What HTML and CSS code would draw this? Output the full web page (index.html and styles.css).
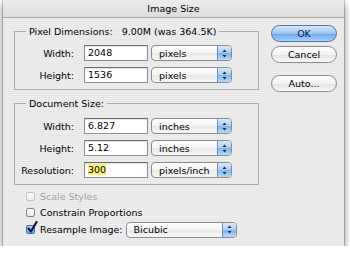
FILE: index.html
```html
<!DOCTYPE html>
<html lang="en">
<head>
    <meta charset="UTF-8">
    <title>Image Size</title>
    <link rel="stylesheet" href="styles.css">
</head>
<body>
    <div class="window">
        <div class="titlebar">Image Size</div>
        <div class="dialog">
            <div class="main">
                <fieldset class="group">
                    <legend>Pixel Dimensions:<span class="gap">9.00M (was 364.5K)</span></legend>
                    <div class="row">
                        <label>Width:</label>
                        <div class="field">2048</div>
                        <div class="popup">pixels<span class="stepper"><svg width="5" height="9" viewBox="0 0 5 9"><path d="M2.5 0.5 L4.5 3 L0.5 3 Z M0.5 6 L4.5 6 L2.5 8.5 Z" fill="#1d2d45"/></svg></span></div>
                    </div>
                    <div class="row">
                        <label>Height:</label>
                        <div class="field">1536</div>
                        <div class="popup">pixels<span class="stepper"><svg width="5" height="9" viewBox="0 0 5 9"><path d="M2.5 0.5 L4.5 3 L0.5 3 Z M0.5 6 L4.5 6 L2.5 8.5 Z" fill="#1d2d45"/></svg></span></div>
                    </div>
                </fieldset>

                <fieldset class="group doc">
                    <legend>Document Size:</legend>
                    <div class="row">
                        <label>Width:</label>
                        <div class="field">6.827</div>
                        <div class="popup">inches<span class="stepper"><svg width="5" height="9" viewBox="0 0 5 9"><path d="M2.5 0.5 L4.5 3 L0.5 3 Z M0.5 6 L4.5 6 L2.5 8.5 Z" fill="#1d2d45"/></svg></span></div>
                    </div>
                    <div class="row">
                        <label>Height:</label>
                        <div class="field">5.12</div>
                        <div class="popup">inches<span class="stepper"><svg width="5" height="9" viewBox="0 0 5 9"><path d="M2.5 0.5 L4.5 3 L0.5 3 Z M0.5 6 L4.5 6 L2.5 8.5 Z" fill="#1d2d45"/></svg></span></div>
                    </div>
                    <div class="row">
                        <label>Resolution:</label>
                        <div class="field"><span class="selected">300</span></div>
                        <div class="popup">pixels/inch<span class="stepper"><svg width="5" height="9" viewBox="0 0 5 9"><path d="M2.5 0.5 L4.5 3 L0.5 3 Z M0.5 6 L4.5 6 L2.5 8.5 Z" fill="#1d2d45"/></svg></span></div>
                    </div>
                </fieldset>

                <div class="options">
                    <div class="check disabled"><span class="box"></span>Scale Styles</div>
                    <div class="check"><span class="box"></span>Constrain Proportions</div>
                    <div class="check resample">
                        <span class="box checked"><svg width="12" height="13" viewBox="0 0 12 13"><path d="M2.5 7.5 L5 10.5 L10.5 1" fill="none" stroke="#0f1f44" stroke-width="2.2" stroke-linecap="round" stroke-linejoin="round"/></svg></span>Resample Image:
                        <div class="popup wide">Bicubic<span class="stepper"><svg width="5" height="9" viewBox="0 0 5 9"><path d="M2.5 0.5 L4.5 3 L0.5 3 Z M0.5 6 L4.5 6 L2.5 8.5 Z" fill="#1d2d45"/></svg></span></div>
                    </div>
                </div>
            </div>

            <div class="buttons">
                <div class="btn default">OK</div>
                <div class="btn">Cancel</div>
                <div class="btn auto">Auto...</div>
            </div>
        </div>
    </div>
</body>
</html>
```

FILE: styles.css
```css
body {
    margin: 0;
    background-color: #fff;
    color: #000;
    font-family: "DejaVu Sans", sans-serif;
    font-size: 9.5px;
}
.window {
    margin-left: 3px;
    width: 341px;
    height: 246px;
    background: repeating-linear-gradient(#eeeeee 0 1px, #e6e6e6 1px 2px);
    box-shadow: 0 0 0 1px rgba(0, 0, 0, 0.18), 0 4px 8px rgba(0, 0, 0, 0.5);
}
.titlebar {
    height: 17px;
    line-height: 17px;
    text-align: center;
    border-bottom: 1px solid #a4a4a4;
    background: linear-gradient(#ececec, #dedede);
}
.dialog {
    display: flex;
    gap: 12px;
    padding: 7px 7px 0 11px;
}
.main {
    width: 245px;
}
.group {
    margin: 0;
    padding: 7px 0 6px;
    border: 1px solid #a9a9a9;
    min-width: 0;
}
.group legend {
    margin-left: 11px;
    padding: 0 3px;
    line-height: 13px;
}
.group legend .gap {
    margin-left: 9px;
}
.group.doc {
    margin-top: 7px;
    padding-top: 8px;
}
.row {
    display: flex;
    align-items: center;
    height: 16px;
}
.row + .row {
    margin-top: 6px;
}
.row label {
    width: 59px;
    margin-right: 10px;
    text-align: right;
}
.field {
    width: 64px;
    height: 16px;
    box-sizing: border-box;
    padding-left: 3px;
    line-height: 14px;
    background-color: #fff;
    border: 1px solid #8e8e8e;
    border-top-color: #6c6c6c;
    box-shadow: inset 0 1px 1px rgba(0, 0, 0, 0.12);
}
.selected {
    background-color: #f8f07a;
}
.popup {
    display: flex;
    align-items: center;
    width: 81px;
    height: 16px;
    margin-left: 3px;
    box-sizing: border-box;
    padding-left: 7px;
    border: 1px solid #8c8c8c;
    border-radius: 4px;
    background: linear-gradient(#ffffff, #f4f4f4 50%, #e9e9e9 51%, #f7f7f7);
}
.stepper {
    display: flex;
    align-items: center;
    justify-content: center;
    width: 13px;
    height: 14px;
    margin-left: auto;
    border-left: 1px solid #6f8db8;
    border-radius: 0 3px 3px 0;
    background: linear-gradient(#dbeafc, #a9cdf5 50%, #7eb3ee 51%, #b9dbfa);
}
.options {
    margin-top: 3px;
    padding-left: 12px;
}
.check {
    display: flex;
    align-items: center;
    height: 16px;
}
.check.disabled {
    color: #a2a2a2;
}
.box {
    position: relative;
    width: 9px;
    height: 9px;
    margin-right: 5px;
    box-sizing: border-box;
    border: 1px solid #858585;
    border-radius: 2px;
    background: linear-gradient(#ffffff, #e6e6e6);
}
.disabled .box {
    border-color: #c2c2c2;
    background: linear-gradient(#fafafa, #efefef);
}
.box.checked {
    border-color: #4a6fa8;
    background: linear-gradient(#bcd8f8, #6fa5e8);
}
.box.checked svg {
    position: absolute;
    left: -1px;
    top: -5px;
}
.check.resample {
    height: 17px;
    margin-top: 1px;
}
.popup.wide {
    width: 111px;
    margin-left: 3px;
}
.buttons {
    width: 66px;
}
.btn {
    height: 17px;
    box-sizing: border-box;
    line-height: 15px;
    text-align: center;
    border: 1px solid #8a8a8a;
    border-radius: 9px;
    background: linear-gradient(#ffffff, #f3f3f3 50%, #e3e3e3 51%, #f8f8f8);
}
.btn + .btn {
    margin-top: 4px;
}
.btn.auto {
    margin-top: 12px;
}
.btn.default {
    color: #10203a;
    border-color: #4d73aa;
    background: linear-gradient(#d6e8fc, #9cc6f5 50%, #6ba6ec 51%, #a8d2f9);
}
```
